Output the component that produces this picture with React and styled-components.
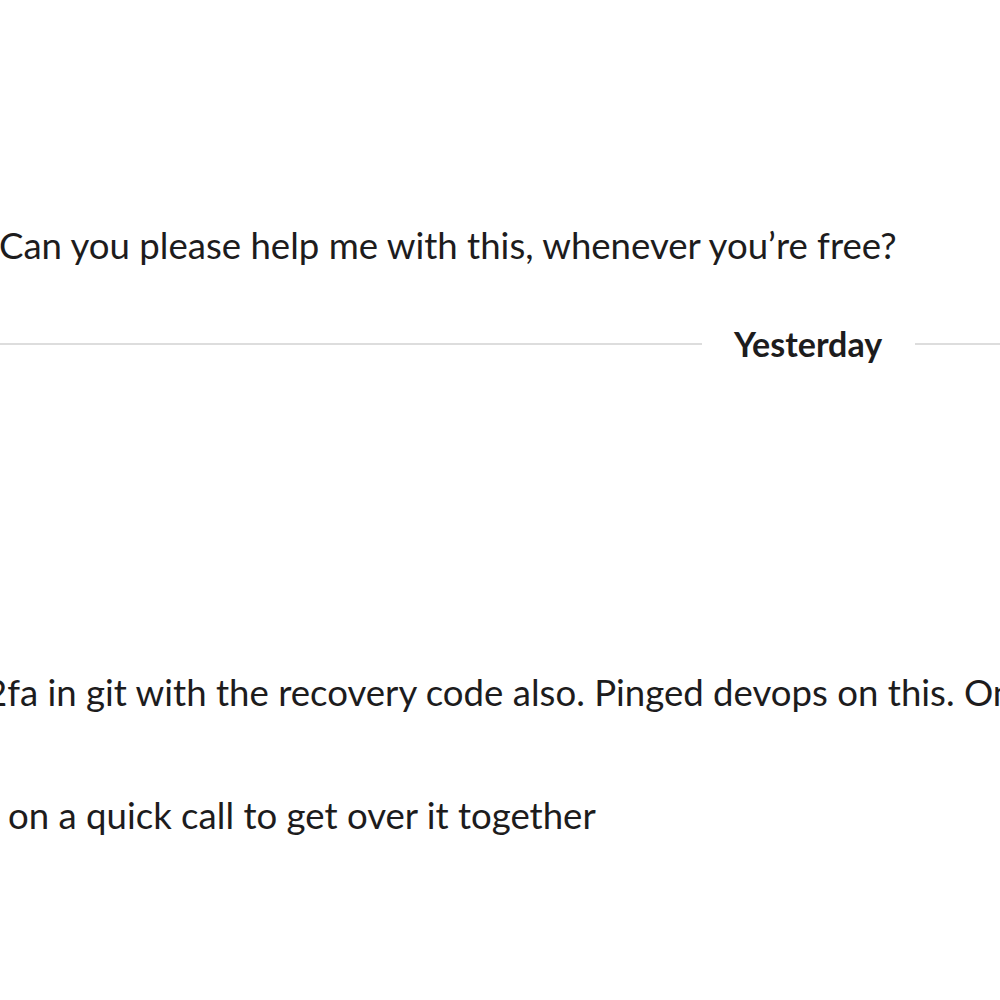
import React from "react";
import styled, { createGlobalStyle } from "styled-components";

const GlobalStyle = createGlobalStyle`
  html, body {
    margin: 0;
    padding: 0;
    background: #fff;
    overflow: hidden;
  }
  body {
    font-family: Lato, "Noto Sans", sans-serif;
    color: #1d1c1d;
  }
`;

const Page = styled.div`
  width: 1000px;
  height: 1000px;
  overflow: hidden;
  display: flex;
  flex-direction: column;
  padding-top: 221px;
  box-sizing: border-box;
`;

const MessageLine = styled.div`
  height: 48px;
  line-height: 48px;
  font-size: 36.6px;
  white-space: nowrap;
  margin-top: ${(p) => p.$top || 0}px;
  margin-left: ${(p) => p.$indent || 0}px;
`;

const DividerRow = styled.div`
  display: flex;
  align-items: center;
  width: 1617px;
  height: 48px;
  margin-top: 51px;
  flex-shrink: 0;
`;

const Rule = styled.div`
  flex: 1;
  height: 2px;
  background: #dddddd;
`;

const DayLabel = styled.span`
  padding: 0 33px 0 32px;
  font-size: 34px;
  font-weight: 700;
  line-height: 48px;
`;

export default function App() {
  return (
    <>
      <GlobalStyle />
      <Page>
        <MessageLine $indent={-1}>
          Can you please help me with this, whenever you’re free?
        </MessageLine>
        <DividerRow>
          <Rule />
          <DayLabel>Yesterday</DayLabel>
          <Rule />
        </DividerRow>
        <MessageLine $top={300} $indent={-14}>
          2fa in git with the recovery code also. Pinged devops on this. One more thing
        </MessageLine>
        <MessageLine $top={75} $indent={8}>
          on a quick call to get over it together
        </MessageLine>
      </Page>
    </>
  );
}
